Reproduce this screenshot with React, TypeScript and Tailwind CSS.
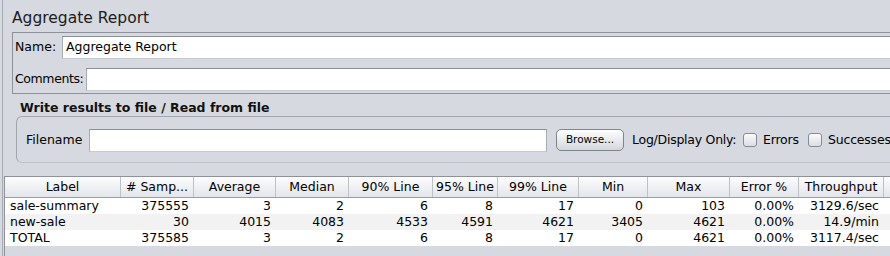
const font = "font-['DejaVu_Sans',sans-serif]";

const columns = [
  { name: "Label", w: 116 },
  { name: "# Samp...", w: 73 },
  { name: "Average", w: 82 },
  { name: "Median", w: 73 },
  { name: "90% Line", w: 84 },
  { name: "95% Line", w: 65 },
  { name: "99% Line", w: 81 },
  { name: "Min", w: 69 },
  { name: "Max", w: 82 },
  { name: "Error %", w: 69 },
  { name: "Throughput", w: 85 },
  { name: "", w: 90 },
];

const rows = [
  ["sale-summary", "375555", "3", "2", "6", "8", "17", "0", "103", "0.00%", "3129.6/sec", ""],
  ["new-sale", "30", "4015", "4083", "4533", "4591", "4621", "3405", "4621", "0.00%", "14.9/min", ""],
  ["TOTAL", "375585", "3", "2", "6", "8", "17", "0", "4621", "0.00%", "3117.4/sec", ""],
];

function TextField({ value, className }: { value?: string; className?: string }) {
  return (
    <div
      className={`h-[23px] bg-white border border-[#A7ADB4] border-t-[#8A9098] border-b-[#C6CBD1] flex items-center px-[3px] text-[12.5px] text-black ${className ?? ""}`}
    >
      {value}
    </div>
  );
}

function Checkbox({ label, w }: { label: string; w: number }) {
  return (
    <div className="flex items-center gap-[6px]" style={{ width: w }}>
      <div className="shrink-0 w-[14px] h-[14px] rounded-[3px] border border-[#868C93] bg-gradient-to-b from-[#FBFBFC] to-[#DADDE2]" />
      <span className="text-[12.5px] text-black whitespace-nowrap tracking-[-0.2px]">{label}</span>
    </div>
  );
}

export default function App() {
  return (
    <div className={`w-[890px] h-[256px] overflow-hidden bg-[#D6D9DF] pl-[2px] ${font}`}>
      <div className="h-full border-l border-[#A6AAB1] flex flex-col">
        <div className="h-[32px] flex items-center pt-[5px] pl-[9px] text-[15.5px] text-[#1c1c1c]">
          Aggregate Report
        </div>

        <div className="ml-[9px] w-[900px] border border-[#8E9298] pt-[3px] pb-[2px] flex flex-col gap-[9px]">
          <div className="flex items-center">
            <span className="w-[49px] shrink-0 pl-[2px] text-[12.5px] text-black">Name:</span>
            <TextField value="Aggregate Report" className="flex-1" />
          </div>
          <div className="flex items-center">
            <span className="w-[73px] shrink-0 pl-[2px] text-[12.5px] text-black whitespace-nowrap tracking-[-0.4px]">
              Comments:
            </span>
            <TextField className="flex-1" />
          </div>
        </div>

        <div className="h-[22px] flex items-end pl-[17px] pb-[2px] leading-none text-[12.5px] font-bold text-[#111]">
          Write results to file / Read from file
        </div>

        <div className="ml-[13px] w-[900px] h-[47px] rounded-[6px] border border-[#A2A6AD] border-b-[#BFC3C9] flex items-center pl-[9px] pt-[1px]">
          <span className="w-[63px] shrink-0 text-[12.5px] text-black">Filename</span>
          <TextField className="w-[458px] shrink-0" />
          <div className="ml-[9px] shrink-0 w-[68px] h-[22px] rounded-[5px] border border-[#7F858C] bg-gradient-to-b from-[#FEFEFE] to-[#D3D7DC] flex items-center justify-center text-[10.5px] text-black">
            Browse...
          </div>
          <span className="ml-[8px] w-[105px] shrink-0 whitespace-nowrap tracking-[-0.25px] text-[12.5px] text-black">
            Log/Display Only:
          </span>
          <div className="ml-[6px] flex items-center">
            <Checkbox label="Errors" w={65} />
            <Checkbox label="Successes" w={100} />
          </div>
        </div>

        <div className="mt-[13px] ml-[1px] flex-1 border-l border-t border-[#8E9298] flex flex-col">
          <div className="flex h-[21px] bg-gradient-to-b from-[#FDFDFE] to-[#E2E5EA] border-b border-[#9A9EA5]">
            {columns.map((c, i) => (
              <div
                key={i}
                style={{ width: c.w }}
                className="shrink-0 border-r border-[#BEC2C8] flex items-center justify-center text-[12.5px] text-black"
              >
                {c.name}
              </div>
            ))}
          </div>
          {rows.map((r, ri) => (
            <div key={ri} className={`flex h-[16px] ${ri === 1 ? "bg-[#F2F2F2]" : "bg-white"}`}>
              {r.map((cell, ci) => (
                <div
                  key={ci}
                  style={{ width: columns[ci].w }}
                  className={`shrink-0 flex items-center text-[12.5px] text-black ${ci === 0 ? "pl-[5px]" : "justify-end pr-[5px]"}`}
                >
                  {cell}
                </div>
              ))}
            </div>
          ))}
        </div>
      </div>
    </div>
  );
}
